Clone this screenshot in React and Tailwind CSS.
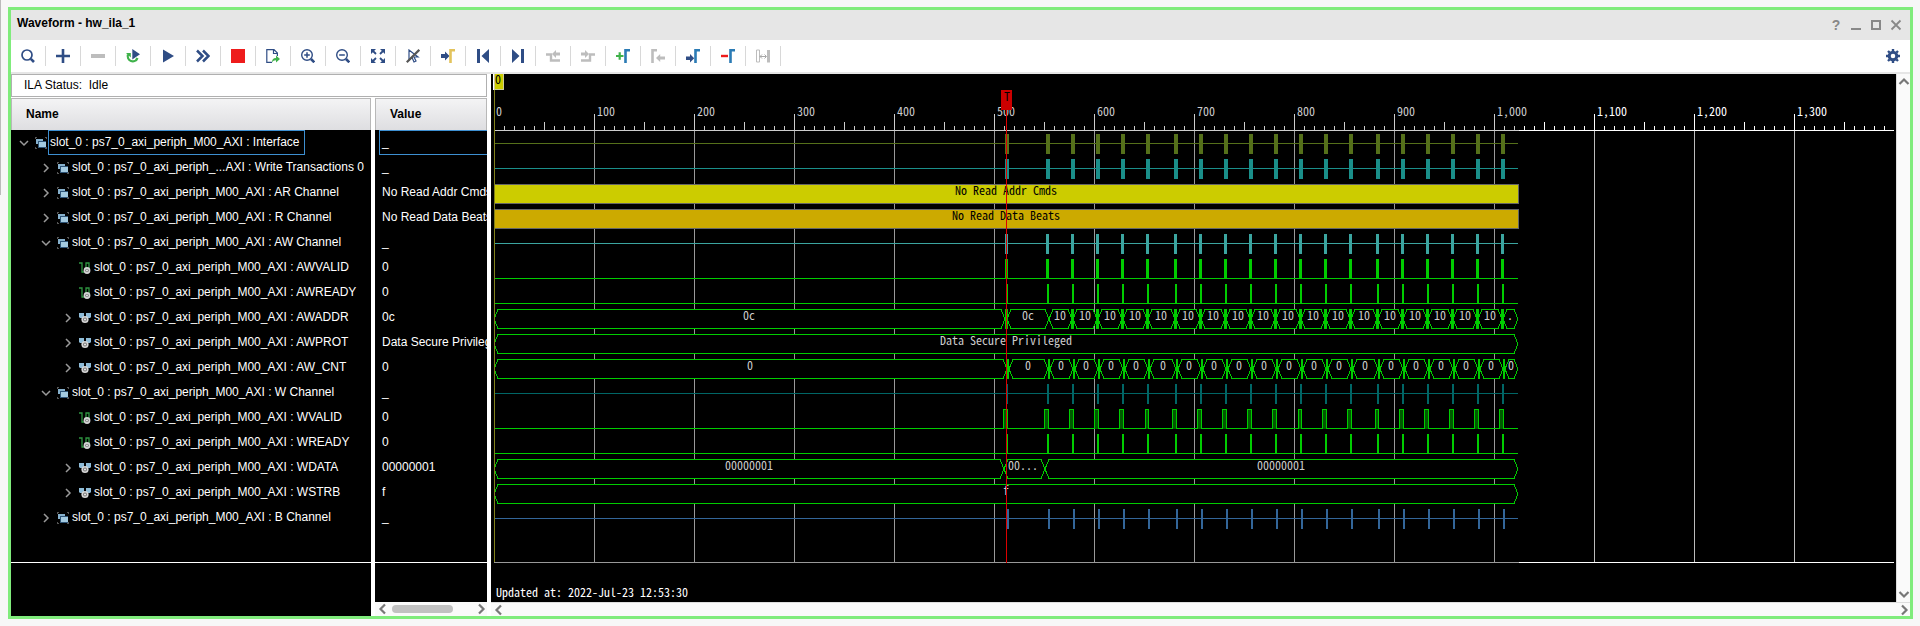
import React, { useState } from "react";

const ROWS = [
  { level: 0, kind: "group", open: true, name: "slot_0 : ps7_0_axi_periph_M00_AXI : Interface", value: "_" },
  { level: 1, kind: "group", open: false, name: "slot_0 : ps7_0_axi_periph_...AXI : Write Transactions 0", value: "_" },
  { level: 1, kind: "group", open: false, name: "slot_0 : ps7_0_axi_periph_M00_AXI : AR Channel", value: "No Read Addr Cmds" },
  { level: 1, kind: "group", open: false, name: "slot_0 : ps7_0_axi_periph_M00_AXI : R Channel", value: "No Read Data Beats" },
  { level: 1, kind: "group", open: true, name: "slot_0 : ps7_0_axi_periph_M00_AXI : AW Channel", value: "_" },
  { level: 2, kind: "signal", name: "slot_0 : ps7_0_axi_periph_M00_AXI : AWVALID", value: "0" },
  { level: 2, kind: "signal", name: "slot_0 : ps7_0_axi_periph_M00_AXI : AWREADY", value: "0" },
  { level: 2, kind: "bus", open: false, name: "slot_0 : ps7_0_axi_periph_M00_AXI : AWADDR", value: "0c" },
  { level: 2, kind: "bus", open: false, name: "slot_0 : ps7_0_axi_periph_M00_AXI : AWPROT", value: "Data Secure Privileged" },
  { level: 2, kind: "bus", open: false, name: "slot_0 : ps7_0_axi_periph_M00_AXI : AW_CNT", value: "0" },
  { level: 1, kind: "group", open: true, name: "slot_0 : ps7_0_axi_periph_M00_AXI : W Channel", value: "_" },
  { level: 2, kind: "signal", name: "slot_0 : ps7_0_axi_periph_M00_AXI : WVALID", value: "0" },
  { level: 2, kind: "signal", name: "slot_0 : ps7_0_axi_periph_M00_AXI : WREADY", value: "0" },
  { level: 2, kind: "bus", open: false, name: "slot_0 : ps7_0_axi_periph_M00_AXI : WDATA", value: "00000001" },
  { level: 2, kind: "bus", open: false, name: "slot_0 : ps7_0_axi_periph_M00_AXI : WSTRB", value: "f" },
  { level: 1, kind: "group", open: false, name: "slot_0 : ps7_0_axi_periph_M00_AXI : B Channel", value: "_" },
];

const INDENT = ["pl-2", "pl-[30px]", "pl-[52px]"];

const NAVY = "#2f4d85";
const GRAY = "#bdbdbd";
const BLUE = "#2b7bb5";

// toolbar drawings, all on a 14x14 grid
const TOOLS = [
  { label: "Find", art: <><circle cx="6" cy="6" r="5" fill="none" stroke={NAVY} strokeWidth="1.7" /><path d="M9.8 9.8L13 13" stroke={NAVY} strokeWidth="2.6" /></> },
  { label: "Add", art: <path d="M7 0v14M0 7h14" stroke={NAVY} strokeWidth="2.6" /> },
  { label: "Remove", art: <path d="M0 7h14" stroke={GRAY} strokeWidth="4" /> },
  { label: "Auto re-trigger", art: <><path d="M6.3 0L14 5.3 6.3 10.5z" fill={NAVY} /><path d="M2 5.5A5 5 0 1 0 11.5 9" fill="none" stroke="#3fb24a" strokeWidth="2.2" /><path d="M0 4h4.8v4.5z" fill="#3fb24a" /></> },
  { label: "Run trigger", art: <path d="M2 .5L13 7 2 13.5z" fill={NAVY} /> },
  { label: "Run immediate", art: <path d="M1 1.5L6.5 7 1 12.5M7 1.5L12.5 7 7 12.5" fill="none" stroke={NAVY} strokeWidth="2.5" /> },
  { label: "Stop trigger", art: <path d="M0 0h14v14H0z" fill="#ee1c1c" /> },
  { label: "Export data", art: <><path d="M6 13.4H.8V.6H8L11.4 4v3M7.5 1v3.5h4" fill="none" stroke={NAVY} strokeWidth="1.2" /><path d="M6 13.5c0-3 1-4.5 4-4.5V6.5L14 10l-4 3.5V11.3c-2 0-3 .7-4 2.2z" fill="#3fb24a" /></> },
  { label: "Zoom in", art: <><circle cx="6" cy="6" r="5.3" fill="none" stroke={NAVY} strokeWidth="1.4" /><path d="M3.2 6h5.6M6 3.2v5.6" stroke={NAVY} strokeWidth="1.5" /><path d="M10 10l3.3 3.3" stroke={NAVY} strokeWidth="2.6" /></> },
  { label: "Zoom out", art: <><circle cx="6" cy="6" r="5.3" fill="none" stroke={NAVY} strokeWidth="1.4" /><path d="M3.2 6h5.6" stroke={NAVY} strokeWidth="1.5" /><path d="M10 10l3.3 3.3" stroke={NAVY} strokeWidth="2.6" /></> },
  { label: "Zoom fit", art: <><path d="M0 0h5L0 5zM14 0v5L9 0zM0 14V9l5 5zM14 14H9l5-5z" fill={NAVY} /><path d="M1.5 1.5L5 5M12.5 1.5L9 5M1.5 12.5L5 9M12.5 12.5L9 9" stroke={NAVY} strokeWidth="1.8" /></> },
  { label: "Snap cursor", art: <><path d="M3 1v10l3-2.5L8 13l2-1-2-4h4z" fill="none" stroke={NAVY} strokeWidth="1.2" /><path d="M.8 13.2L13.3.8" stroke="#555" strokeWidth="2.2" /></> },
  { label: "Go to cursor", art: <><path d="M0 5h4V2.5L8.5 7 4 11.5V9H0z" fill={NAVY} /><path d="M9.5 14V1.3H14" fill="none" stroke="#e3c35c" strokeWidth="2.6" /></> },
  { label: "Go to time 0", art: <path d="M1 0h3v14H1zM13 0v14L5.5 7z" fill={NAVY} /> },
  { label: "Go to last time", art: <path d="M10 0h3v14h-3zM1 0v14l7.5-7z" fill={NAVY} /> },
  { label: "Previous transition", art: <><path d="M6 5l4-4v2.5h4v3h-4V9z" fill={GRAY} /><path d="M0 5.5h5v6h9" fill="none" stroke={GRAY} strokeWidth="2.4" /></> },
  { label: "Next transition", art: <><path d="M0 3.5h4V1l4 4-4 4V6.5H0z" fill={GRAY} /><path d="M0 11.5h9v-6h5" fill="none" stroke={GRAY} strokeWidth="2.4" /></> },
  { label: "Add marker", art: <><path d="M0 7h7.5M3.7 3.3v7.4" stroke="#3fb24a" strokeWidth="2.2" /><path d="M9.5 14V1.3H14" fill="none" stroke={BLUE} strokeWidth="2.6" /></> },
  { label: "Previous marker", art: <><path d="M1.5 14V1.3H6" fill="none" stroke={GRAY} strokeWidth="2.6" /><path d="M5 9l4.2-4v2.5H14v3H9.200V13z" fill={GRAY} /></> },
  { label: "Next marker", art: <><path d="M0 7.5h4V5l4.2 4.2L4 13.5V11H0z" fill={NAVY} /><path d="M9.5 14V1.3H14" fill="none" stroke={BLUE} strokeWidth="2.6" /></> },
  { label: "Delete marker", art: <><path d="M0 7h7" stroke="#ee1c1c" strokeWidth="2.4" /><path d="M9.5 14V1.3H14" fill="none" stroke={BLUE} strokeWidth="2.6" /></> },
  { label: "Swap cursors", art: <><path d="M.5 1h3v12h-3z" fill="none" stroke={GRAY} /><path d="M11 1h3v12.5h-3z" fill={GRAY} /><path d="M4 7.5h6M6 5.5l-2 2 2 2M8.5 5.5l2 2-2 2" fill="none" stroke="#a8a8a8" /></> },
];

const Chevron = ({ open }) => (
  <svg width="10" height="10" viewBox="0 0 10 10" fill="none" stroke="#9a9a9a" strokeWidth="1.5">
    <path d={open ? "M1 3l4 4 4-4" : "M3 1l4 4-4 4"} />
  </svg>
);

const KindIcon = ({ kind }) => (
  <svg width="12" height="12" viewBox="0 0 12 12" className="shrink-0">
    {kind === "group" && (
      <>
        <path d="M0 0h2v1H1v1H0zM10 0h2v2h-1V1h-1zM0 10h1v1h1v1H0zM11 10h1v2h-2v-1h1z" fill="#555" />
        <path d="M1 2h7v5H1z" fill="#86b0cc" />
        <path d="M3 4h8v7H3z" fill="#2f5578" />
        <path d="M4 5h7v5H4z" fill="#a3cae0" />
      </>
    )}
    {kind === "signal" && (
      <>
        <path d="M0 1h3v9h2M7 6V1h3v5" fill="none" stroke="#2e9440" strokeWidth="1.3" />
        <circle cx="8" cy="8.5" r="3.4" fill="#d6d6d6" />
        <circle cx="8" cy="8.5" r="1.8" fill="#777" />
        <circle cx="8" cy="8.5" r=".9" fill="#eee" />
      </>
    )}
    {kind === "bus" && (
      <>
        <path d="M0 1h5v5H1L0 5zM7 1h5v4l-1 1H7z" fill="#8fbcd8" />
        <circle cx="6" cy="7.5" r="3.6" fill="#d6d6d6" />
        <circle cx="6" cy="7.5" r="2" fill="#777" />
        <circle cx="6" cy="7.5" r="1" fill="#eee" />
      </>
    )}
  </svg>
);

const Arrow = ({ d }) => (
  <svg width="12" height="12" viewBox="0 0 12 12" fill="none" stroke="#777" strokeWidth="2.2" className="shrink-0">
    <path d={d} />
  </svg>
);

const LEFT = "M8 1.5L3.5 6 8 10.5";
const RIGHT = "M4 1.5L8.5 6 4 10.5";
const UP = "M1.5 8L6 3.5 10.5 8";
const DOWN = "M1.5 4L6 8.5 10.5 4";

// one pixel per sample, sample 0 sits at X0
const X0 = 3;
const END = X0 + 1024;
const BURSTS = [511, 552, 577, 602, 627, 652, 680, 705, 730, 755, 780, 805, 830, 855, 882, 907, 932, 957, 982, 1007].map((s) => s + X0);
const NARROW = [5, 11, 14];
const top = (row) => 60 + row * 25;

const Label = ({ x, row, children, fill = "#ccc", anchor = "middle" }) => (
  <text x={x} y={top(row) + 11} fill={fill} textAnchor={anchor}>{children}</text>
);

function Pulses({ row, color, dx = 0, w }) {
  return (
    <g fill={color}>
      <rect x={X0} y={top(row) + 9} width={1024} height="1" />
      {BURSTS.map((x) => <rect key={x} x={x + dx} y={top(row)} width={w} height="20" />)}
    </g>
  );
}

function Digital({ row, dx = 0, w }) {
  return (
    <g fill="#00cc00">
      <rect x={X0} y={top(row) + 19} width={1024} height="1" />
      {BURSTS.map((x) => <rect key={x} x={x + dx} y={top(row)} width={w} height="20" />)}
    </g>
  );
}

function Valid({ row }) {
  return (
    <g>
      <rect x={X0} y={top(row) + 19} width={1024} height="1" fill="#00cc00" />
      {BURSTS.map((x, i) => {
        const w = NARROW.includes(i) ? 4 : 5;
        return (
          <g key={x}>
            <rect x={x + 3 - w} y={top(row)} width={w} height="20" fill="#00cc00" />
            <rect x={x + 4 - w} y={top(row) + 1} width={w - 2} height="19" fill="#005a00" />
          </g>
        );
      })}
    </g>
  );
}

function Bus({ row, segments, blocks = [], blockWidth }) {
  const y1 = top(row) + 0.5;
  const y2 = top(row) + 19.5;
  const ym = top(row) + 10;
  return (
    <g>
      {segments.map(([a, b]) => (
        <polygon
          key={a}
          points={`${a},${ym} ${a + 4},${y1} ${b - 4},${y1} ${b},${ym} ${b - 4},${y2} ${a + 4},${y2}`}
          fill="#000"
          stroke="#00cc00"
        />
      ))}
      {blocks.map((x) => <rect key={x} x={x} y={top(row)} width={blockWidth} height="20" fill="#00cc00" />)}
      {segments.map(([a, b, text]) => text && <Label key={a} x={Math.floor((a + b) / 2)} row={row}>{text}</Label>)}
    </g>
  );
}

function Waveform() {
  const ticks = [];
  for (let s = 10; s < 1400; s += 10) ticks.push(s);

  const addr = BURSTS.map((x, i) => {
    const from = i === 1 ? x + 3 : x + 2;
    const to = i === 0 ? BURSTS[1] + 3 : i === 19 ? END : BURSTS[i + 1] + 1;
    return [from, to, i === 0 ? "0c" : i === 19 ? "." : "10"];
  });
  const count = BURSTS.map((x, i) => [x + 4, i === 19 ? END : BURSTS[i + 1] + 2, "0"]);

  return (
    <svg
      className="block h-[528px] w-full bg-black"
      fontFamily="'Noto Sans Mono CJK JP', 'DejaVu Sans Mono', monospace"
      fontSize="12"
      shapeRendering="crispEdges"
    >
      {/* ruler and grid */}
      <rect x={X0} y="56" width="100%" height="1" fill="#fff" />
      <rect x={X0} y="56" width="1025" height="1" fill="#ccc" />
      {ticks.map((s) => {
        const h = s % 100 === 0 ? 16 : s % 50 === 0 ? 8 : 4;
        return <rect key={s} x={X0 + s} y={56 - h} width="1" height={h} fill={s > 1024 ? "#fff" : "#ccc"} />;
      })}
      {ticks.filter((s) => s % 100 === 0).map((s) => (
        <g key={s}>
          <rect x={X0 + s} y="57" width="1" height="431" fill={s > 1024 ? "#bbb" : "#999"} />
          <text x={X0 + s + 3} y="42" fill={s > 1024 ? "#fff" : "#ccc"}>{s.toLocaleString("en-US")}</text>
        </g>
      ))}
      <text x={X0 + 2} y="42" fill="#ccc">0</text>
      <rect x={X0} y="488" width="100%" height="1" fill="#fff" />
      <rect x={X0} y="488" width="1025" height="1" fill="#999" />

      <Pulses row={0} color="#55701a" w={4} />
      <Pulses row={1} color="#1a8f8a" w={4} />
      <rect x="3.5" y={top(2) + 0.5} width="1024" height="19" fill="#cccc00" stroke="#666" />
      <Label x={515} row={2} fill="#000">No Read Addr Cmds</Label>
      <rect x="3.5" y={top(3) + 0.5} width="1024" height="19" fill="#ccaa00" stroke="#666" />
      <Label x={515} row={3} fill="#000">No Read Data Beats</Label>
      <Pulses row={4} color="#3ba5a0" w={3} />
      <Digital row={5} w={3} />
      <Digital row={6} dx={1} w={2} />
      <Bus row={7} segments={[[X0, 514, "0c"], ...addr]} blocks={BURSTS.filter((x, i) => i !== 1)} blockWidth={3} />
      <Bus row={8} segments={[[X0, END, "Data Secure Privileged"]]} />
      <Bus row={9} segments={[[X0, 516, "0"], ...count]} blocks={BURSTS.map((x) => x + 2)} blockWidth={2} />
      <Pulses row={10} color="#006666" dx={1} w={2} />
      <Valid row={11} />
      <Digital row={12} dx={1} w={2} />
      <Bus row={13} segments={[[X0, 513, "00000001"], [513, 554], [554, END, "00000001"]]} />
      <Label x={517} row={13} anchor="start">00...</Label>
      <Bus row={14} segments={[[X0, END, "f"]]} />
      <Pulses row={15} color="#336699" dx={2} w={2} />

      {/* cursor at 0 and trigger marker */}
      <rect x="3" y="16" width="1" height="472" fill="#80801a" />
      <rect x="3.5" y="-.5" width="9" height="16" fill="#cccc00" stroke="#cccc99" />
      <rect x="2" y="0" width="1" height="16" fill="#fff" />
      <text x="4" y="10" fill="#000">0</text>
      <rect x="510" y="16" width="11" height="20" fill="#cc0000" />
      <rect x="515" y="36" width="1" height="453" fill="#dd0000" />
      <text x="513" y="27" fill="#000">T</text>

      <text x="5" y="523" fill="#fff">Updated at: 2022-Jul-23 12:53:30</text>
    </svg>
  );
}

function App() {
  const [selected, setSelected] = useState(0);

  return (
    <div className="flex gap-[7px] bg-[#f7f7f7] pr-[7px] font-['Liberation_Sans',Arial,sans-serif] text-xs text-black">
      <div className="h-[195px] w-px shrink-0 bg-[#bbb]" />
      <div className="my-[7px] min-w-0 flex-1 border-[3px] border-[#80ec7c] bg-white">
        <header className="flex h-[30px] items-center justify-between bg-[#e6e6e6] pl-1.5 pr-2">
          <h1 className="pb-3 pt-2 font-bold">Waveform - hw_ila_1</h1>
          <div className="flex gap-2 text-[#888]">
            <button aria-label="Help" className="w-3 font-bold text-sm leading-3">?</button>
            <button aria-label="Minimize">
              <svg width="12" height="12"><path d="M1 10h10" stroke="currentColor" strokeWidth="2" /></svg>
            </button>
            <button aria-label="Maximize">
              <svg width="12" height="12"><path d="M2 2h8v8H2z" fill="none" stroke="currentColor" strokeWidth="2" /></svg>
            </button>
            <button aria-label="Close">
              <svg width="12" height="12"><path d="M1.5 1.5l9 9M10.5 1.5l-9 9" stroke="currentColor" strokeWidth="1.8" /></svg>
            </button>
          </div>
        </header>

        <div className="flex h-[34px] items-center justify-between border-b-2 border-[#e6e6e6] pr-2.5">
          <div className="flex">
            {TOOLS.map((tool) => (
              <button
                key={tool.label}
                aria-label={tool.label}
                className="flex h-5 w-[35px] items-center justify-center border-r border-[#d8d8d8]"
              >
                <svg width="14" height="14" viewBox="0 0 14 14">{tool.art}</svg>
              </button>
            ))}
          </div>
          <button aria-label="Settings">
            <svg width="14" height="14" viewBox="0 0 14 14">
              <circle cx="7" cy="7" r="3.8" fill="none" stroke={NAVY} strokeWidth="3" />
              <path d="M7 0v2M7 12v2M0 7h2M12 7h2M2 2l1.5 1.5M10.5 10.5L12 12M12 2l-1.5 1.5M3.5 10.5L2 12" stroke={NAVY} strokeWidth="2.4" />
            </svg>
          </button>
        </div>

        <div className="flex gap-1">
          <div className="flex w-[476px] shrink-0 flex-col">
            <p className="h-[23px] border border-[#b0b0b0] pl-3 leading-[21px]">ILA Status:&nbsp; Idle</p>
            <div className="mt-px flex flex-1 gap-1 text-white">
              <div className="flex w-[360px] flex-col bg-black">
                <h2 className="h-8 border border-b-0 border-[#b8b8b8] bg-linear-to-b from-[#f4f4f5] to-[#dedee1] pl-3.5 leading-[30px] font-bold text-black">Name</h2>
                <ul className="h-[432px]">
                  {ROWS.map((row, i) => (
                    <li key={row.name} className={`flex h-[25px] items-center ${INDENT[row.level]}`} onClick={() => setSelected(i)}>
                      {row.kind === "signal" ? (
                        <span className="w-2.5" />
                      ) : (
                        <button aria-label={row.open ? "Collapse" : "Expand"} className="w-2.5"><Chevron open={row.open} /></button>
                      )}
                      <span className="ml-1.5 flex"><KindIcon kind={row.kind} /></span>
                      <span className={`ml-px h-[25px] whitespace-nowrap border px-px leading-[22px] ${i === selected ? "border-[#3d8fd1] pr-1" : "border-transparent"}`}>
                        {row.name}
                      </span>
                    </li>
                  ))}
                </ul>
                <div className="flex-1 border-t border-white" />
              </div>

              <div className="flex w-28 flex-col bg-black">
                <h2 className="h-8 border border-b-0 border-[#b8b8b8] bg-linear-to-b from-[#f4f4f5] to-[#dedee1] pl-3.5 leading-[30px] font-bold text-black">Value</h2>
                <ul className="h-[432px] overflow-hidden pl-1">
                  {ROWS.map((row, i) => (
                    <li
                      key={row.name}
                      className={`h-[25px] overflow-hidden whitespace-nowrap border border-r-0 pl-0.5 leading-[22px] ${i === selected ? "border-[#3d8fd1]" : "border-transparent"}`}
                    >
                      {row.value}
                    </li>
                  ))}
                </ul>
                <div className="flex-1 border-t border-white" />
                <div className="flex h-3.5 items-center bg-[#fafafa] pl-0.5">
                  <Arrow d={LEFT} />
                  <div className="flex-1 px-[3px]"><div className="h-2 w-[61px] rounded-full bg-[#c1c1c1]" /></div>
                  <Arrow d={RIGHT} />
                </div>
              </div>
            </div>
          </div>

          <div className="min-w-0 flex-1">
            <div className="flex">
              <div className="min-w-0 flex-1 bg-black pr-0.5"><Waveform /></div>
              <div className="flex w-3.5 flex-col items-center justify-between border-l border-[#ddd] bg-[#fafafa] py-0.5">
                <Arrow d={UP} />
                <Arrow d={DOWN} />
              </div>
            </div>
            <div className="flex h-3.5 items-center justify-between border-t border-[#ddd] bg-[#fafafa] pl-0.5">
              <Arrow d={LEFT} />
              <Arrow d={RIGHT} />
            </div>
          </div>
        </div>
      </div>
    </div>
  );
}

export default App;
